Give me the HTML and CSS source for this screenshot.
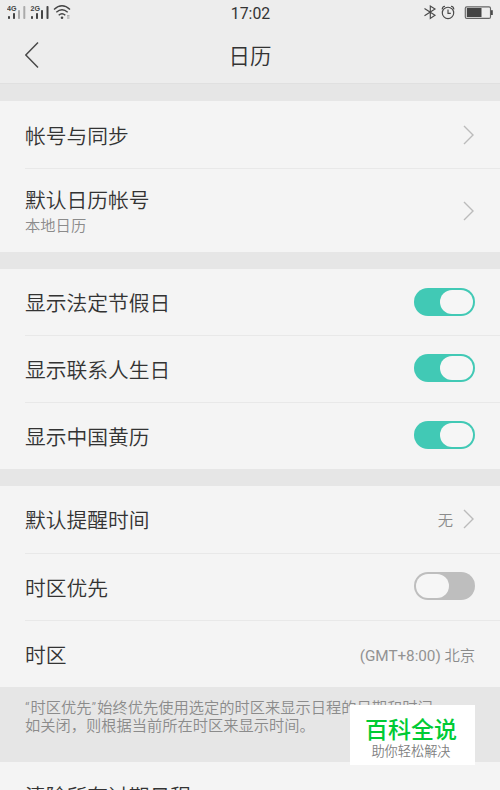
FILE: index.html
```html
<!DOCTYPE html>
<html lang="zh-CN">
<head>
<meta charset="utf-8">
<title>日历</title>
<link rel="stylesheet" href="styles.css">
</head>
<body>
<div class="screen">
  <header class="top">
    <div class="status">
      <svg class="signals" width="68" height="18" viewBox="0 0 68 18">
        <g class="net"><text x="0" y="8.2" textLength="9.5" lengthAdjust="spacingAndGlyphs">4G</text><text x="23.5" y="8.2" textLength="9.5" lengthAdjust="spacingAndGlyphs">2G</text></g>
        <g fill="#444"><rect x="1" y="13" width="2" height="3" rx=".8"/><rect x="6" y="10" width="2" height="6" rx=".8"/><rect x="24" y="13" width="2" height="3" rx=".8"/><rect x="29" y="10" width="2" height="6" rx=".8"/><rect x="34" y="7" width="2" height="9" rx=".8"/><rect x="39.5" y="3" width="2" height="13" rx=".8"/></g>
        <g fill="#aaa"><rect x="11" y="7" width="2" height="9" rx=".8"/><rect x="16.3" y="3" width="2" height="13" rx=".8"/></g>
        <g fill="none" stroke="#444" stroke-width="1.4"><path d="M47 6.5Q55 -.8 63 6.5M49.3 9.3Q55 4.2 60.7 9.3M51.7 12.2Q55 9.2 58.3 12.2"/></g>
        <circle cx="55" cy="14.7" r="1.3" fill="#444"/>
        <path d="M60 12.8h2.5M60 15h2.5" stroke="#999" stroke-width="1.2"/>
      </svg>
      <span class="clock">17:02</span>
      <svg class="devices" width="70" height="18" viewBox="0 0 70 18" fill="none" stroke="#4a4a4a" stroke-width="1.15">
        <path d="M.5 5.5L11 12.3L6.3 15.5V3L11 6L.5 12.8"/>
        <circle cx="24" cy="9.9" r="5.7"/><path d="M24 6.5v3.9h2.8M18.2 6.5Q18.2 3.5 21 3.3M27 3.3Q29.8 3.5 29.8 6.5"/>
        <rect x="41.3" y="3.8" width="25.2" height="11.6" rx="1.5" stroke="#666"/><rect x="42.8" y="5" width="14.7" height="9" fill="#444" stroke="none"/><path d="M67.8 7.2v4.8" stroke-width="2"/>
      </svg>
    </div>
    <div class="titlebar">
      <svg class="back" width="16" height="28" viewBox="0 0 16 28"><path d="M13 1.5L.8 14L13 26.5"/></svg>
      <h1>日历</h1>
    </div>
  </header>

  <section class="group accounts">
    <div class="row"><span class="label">帐号与同步</span><svg class="arrow" viewBox="0 0 12 20"><path d="M1 1L10 10L1 19"/></svg></div>
    <div class="row tall"><div><div class="label">默认日历帐号</div><div class="sub">本地日历</div></div><svg class="arrow" viewBox="0 0 12 20"><path d="M1 1L10 10L1 19"/></svg></div>
  </section>

  <section class="group toggles">
    <div class="row"><span class="label">显示法定节假日</span><span class="switch on"></span></div>
    <div class="row"><span class="label">显示联系人生日</span><span class="switch on"></span></div>
    <div class="row"><span class="label">显示中国黄历</span><span class="switch on"></span></div>
  </section>

  <section class="group">
    <div class="row"><span class="label">默认提醒时间</span><span class="value">无</span><svg class="arrow" viewBox="0 0 12 20"><path d="M1 1L10 10L1 19"/></svg></div>
    <div class="row"><span class="label">时区优先</span><span class="switch"></span></div>
    <div class="row"><span class="label">时区</span><span class="value"><span class="gmt">(GMT+8:00)</span> 北京</span></div>
  </section>

  <p class="note"><span class="quote">“</span>时区优先<span class="quote">”</span>始终优先使用选定的时区来显示日程的日期和时间，<br>如关闭，则根据当前所在时区来显示时间。</p>

  <section class="group last">
    <div class="row"><span class="label">清除所有过期日程</span></div>
  </section>

  <aside class="badge"><strong>百科全说</strong><span>助你轻松解决</span></aside>
</div>
</body>
</html>
```
FILE: styles.css
```css
* { box-sizing: border-box; }
body { margin: 0; font-family: Roboto, "Noto Sans CJK SC", sans-serif; color: #333; }
.screen { position: relative; width: 500px; height: 790px; overflow: hidden; background: #e6e6e6; }
.top { height: 84px; background: #ededed; border-bottom: 1px solid #e0e0e0; }
.status { display: grid; grid-template-columns: 1fr auto 1fr; align-items: start; height: 28px; padding: 3px 6px 0 7px; }
.net { font: bold 7.5px "Liberation Sans", sans-serif; fill: #444; }
.clock { font: 15.8px/22px Roboto, sans-serif; }
.devices { justify-self: end; }
.titlebar { display: grid; grid-template-columns: 1fr auto 1fr; align-items: center; height: 53px; padding: 0 25px; }
.back { fill: none; stroke: #4a4a4a; stroke-width: 1.5; }
h1 { margin: 0; font: 350 21.5px/30px "Noto Sans CJK SC", sans-serif; }
.group { margin-top: 17px; background: #f4f4f4; }
.row { display: flex; align-items: center; height: 67px; padding: 0 25px 1px 0; margin-left: 25px; }
.row + .row { border-top: 1px solid #e8e8e8; }
.accounts .row { padding-bottom: 0; }
.row.tall { height: 84px; }
.label { font-family: "Noto Sans CJK SC", sans-serif; font-weight: 350; font-size: 20.75px; line-height: 28px; }
.tall .label { margin-top: -2px; }
.sub { font-family: "Noto Sans CJK SC", sans-serif; font-weight: 350; font-size: 15.3px; line-height: 22px; color: #8b8b8b; }
.arrow { width: 12px; height: 20px; margin-left: auto; fill: none; stroke: #bbb; stroke-width: 1.4; }
.toggles .row:first-child { height: 66px; padding-bottom: 0; }
.value { margin-left: auto; font-size: 15.3px; font-weight: 350; color: #8b8b8b; }
.value + .arrow { margin-left: 10px; }
.gmt { font-weight: 400; color: #929292; letter-spacing: -.05px; }
.switch { display: flex; width: 61px; height: 28px; margin: 0 0 1px auto; padding: 2px; border-radius: 14px; background: #bebebe; }
.switch::before { content: ""; width: 33px; height: 24px; border-radius: 12px; background: #f6f6f6; }
.switch.on { justify-content: flex-end; background: #41c9b5; }
.note { height: 75px; margin: 0; padding: 10px 0 0 25px; font: 350 15.25px/18px "Noto Sans CJK SC", sans-serif; color: #8b8b8b; white-space: nowrap; }
.quote { padding-right: 1px; font-family: Roboto, sans-serif; line-height: 0; }
.group.last { margin-top: 0; }
.last .row { padding-bottom: 2px; }
.badge { position: absolute; left: 350px; top: 705px; width: 125px; height: 60px; padding: 9px 3px 0 0; background: #fff; display: flex; flex-direction: column; align-items: center; font-family: "Noto Sans CJK SC", sans-serif; }
.badge strong { font-size: 23px; line-height: 29px; font-weight: 500; color: #00cb35; }
.badge span { font-size: 13.2px; line-height: 15px; font-weight: 350; color: #808080; }
```
